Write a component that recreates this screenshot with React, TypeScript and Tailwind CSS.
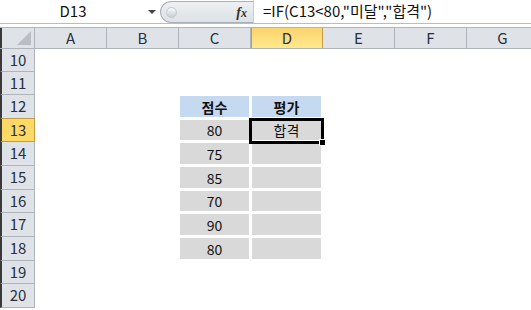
const COLS = ["A", "B", "C", "D", "E", "F", "G"];
const ROWS = [
  { n: 10, h: 23 },
  { n: 11, h: 23 },
  { n: 12, h: 24 },
  { n: 13, h: 23 },
  { n: 14, h: 24 },
  { n: 15, h: 24 },
  { n: 16, h: 23 },
  { n: 17, h: 24 },
  { n: 18, h: 24 },
  { n: 19, h: 23 },
  { n: 20, h: 24 },
];
const SCORES: Record<number, string> = { 13: "80", 14: "75", 15: "85", 16: "70", 17: "90", 18: "80" };
const COL_W = [72, 72, 72, 72, 72, 72, 72];
const FONT = "[font-family:'Noto_Sans_CJK_KR','Liberation_Sans',sans-serif]";

function DataCell({ row, col }: { row: number; col: string }) {
  if (row < 12 || row > 18 || (col !== "C" && col !== "D")) return null;
  const head = row === 12;
  let text = "";
  if (head) text = col === "C" ? "점수" : "평가";
  else if (col === "C") text = SCORES[row];
  else if (row === 13) text = "합격";
  return (
    <div className="h-full w-full pl-[1px] pr-[2px] pt-[1px] pb-[2px]">
      <div
        className={`flex h-full w-full items-center justify-center text-[14px] leading-none text-[#111] ${
          head ? "bg-[#c5d9f1] font-bold" : "bg-[#d9d9d9]"
        }`}
      >
        {text}
      </div>
    </div>
  );
}

export default function App() {
  return (
    <div className={`relative h-[310px] w-[531px] overflow-hidden bg-white ${FONT}`}>
      {/* formula bar */}
      <div className="flex h-[24px] items-stretch border-b border-[#b8bdc4] bg-white">
        <div className="flex w-[146px] items-center justify-center text-[15px] text-[#111]">D13</div>
        <div className="flex w-[12px] items-center justify-center">
          <div className="h-0 w-0 border-x-[4px] border-t-[4px] border-x-transparent border-t-[#444]" />
        </div>
        <div className="ml-[2px] mt-[1px] flex h-[22px] w-[93px] items-center rounded-l-full border border-r-0 border-[#aab1ba] bg-gradient-to-b from-[#eef0f2] to-[#dde1e5]">
          <div className="ml-[5px] h-[11px] w-[11px] rounded-full border border-[#c4c8cd] bg-gradient-to-b from-[#fafafa] to-[#c9cdd2]" />
          <div className="flex-1" />
          <span className="mr-[6px] text-[14px] font-bold italic text-[#333] [font-family:'Liberation_Serif',serif]">
            f<span className="text-[12px]">x</span>
          </span>
        </div>
        <div className="flex flex-1 items-center border-l border-[#c6cbd1] pl-[9px] text-[15px] text-[#111]">
          =IF(C13&lt;80,"미달","합격")
        </div>
      </div>
      <div className="h-[3px] bg-white" />
      {/* column headers */}
      <div className="flex h-[22px] border-y border-[#aeb4bb] bg-[#dfe3e8]">
        <div className="relative h-full w-[35px] shrink-0 border-r border-[#aeb4bb] border-l-2 border-l-[#3a3a3a]">
          <div className="absolute bottom-[3px] right-[3px] h-0 w-0 border-b-[14px] border-l-[14px] border-l-transparent border-b-[#b9bec5]" />
        </div>
        {COLS.map((c, i) => (
          <div
            key={c}
            style={{ width: COL_W[i] }}
            className={`flex shrink-0 items-center justify-center border-r text-[15px] text-[#27313f] ${
              c === "D"
                ? "border-x border-[#c59a45] bg-gradient-to-b from-[#fbd36b] to-[#ffe98e]"
                : "border-[#aeb4bb]"
            }`}
          >
            {c}
          </div>
        ))}
      </div>
      {/* rows */}
      {ROWS.map((r) => (
        <div key={r.n} className="flex" style={{ height: r.h }}>
          <div
            className={`flex w-[35px] shrink-0 items-center justify-center border-l-2 border-l-[#3a3a3a] border-b text-[15px] text-[#27313f] ${
              r.n === 13
                ? "border-r border-[#c59a45] border-t bg-[#ffd966] -mt-[1px]"
                : "border-r border-[#aeb4bb] bg-[#dfe3e8]"
            }`}
          >
            {r.n}
          </div>
          {COLS.map((c, i) => (
            <div key={c} style={{ width: COL_W[i] }} className="shrink-0">
              <DataCell row={r.n} col={c} />
            </div>
          ))}
        </div>
      ))}
      {/* active cell border */}
      <div className="pointer-events-none absolute left-[249px] top-[118px] h-[26px] w-[75px] border-[3px] border-black" />
      <div className="pointer-events-none absolute left-[319px] top-[139px] h-[7px] w-[7px] border border-white bg-black" />
    </div>
  );
}
